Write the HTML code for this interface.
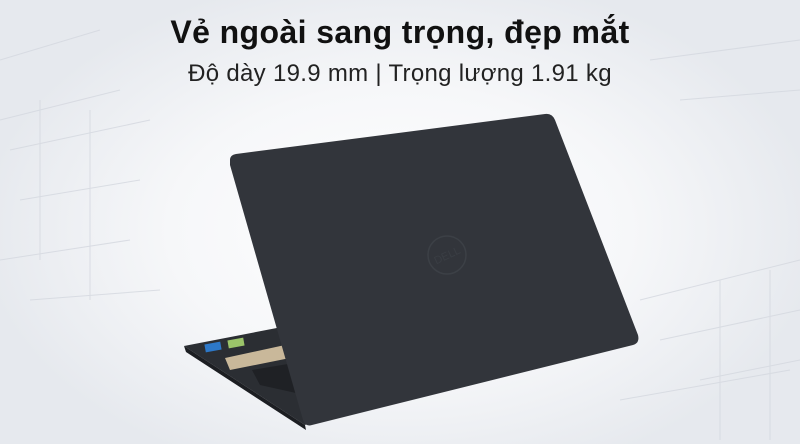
<!DOCTYPE html>
<html><head><meta charset="utf-8"><style>
html,body{margin:0;padding:0}
body{width:800px;height:444px;overflow:hidden;position:relative;font-family:"Liberation Sans",sans-serif;
background:radial-gradient(ellipse 420px 260px at 400px 230px,#ffffff 0%,#f6f7f9 55%,#e6e9ee 100%);}
.t1{position:absolute;left:0;width:800px;top:14px;text-align:center;font-weight:bold;font-size:32px;color:#111;letter-spacing:0.4px}
.t2{position:absolute;left:0;width:800px;top:60px;text-align:center;font-size:24px;color:#222;letter-spacing:0.3px}
svg{position:absolute;left:0;top:0}
</style></head><body>
<svg width="800" height="444">
<g stroke="#d3d7de" stroke-width="1" fill="none" opacity="0.8">
<path d="M0 120 L120 90 M10 150 L150 120 M20 200 L140 180 M0 260 L130 240 M30 300 L160 290 M0 60 L100 30 M40 100 L40 260 M90 110 L90 300"/>
<path d="M640 300 L800 260 M660 340 L800 310 M700 380 L800 360 M620 400 L790 370 M720 280 L720 440 M770 270 L770 440 M650 60 L800 40 M680 100 L800 90"/>
</g>
<polygon points="184,346 282,327 315,420 305,425" fill="#2b2e33"/>
<polygon points="184,346 305,425 306,430 186,352" fill="#1c1e22"/>
<rect x="205" y="343" width="16" height="8" fill="#2d78c8" transform="rotate(-10 213 347)"/>
<rect x="228" y="339" width="16" height="8" fill="#9bc46a" transform="rotate(-10 236 343)"/>
<polygon points="225,358 285,345 290,358 230,370" fill="#c9b89a"/>
<polygon points="252,370 300,362 305,395 260,385" fill="#1f2125"/>
<path d="M230,160 Q230,155 236,154 L545,114 Q552,113 555,120 L638,335 Q640,343 633,345 L312,425 Q305,427 303,420 L230,165 Z" fill="#32353b"/>
<circle cx="447" cy="255" r="19" fill="none" stroke="#3c4046" stroke-width="1.5"/>
<text x="447" y="259" font-size="11" fill="#3a3e44" text-anchor="middle" font-family="Liberation Sans" transform="rotate(-25 447 255)">DELL</text>
</svg>
<div class="t1">Vẻ ngoài sang trọng, đẹp mắt</div>
<div class="t2">Độ dày 19.9 mm | Trọng lượng 1.91 kg</div>
</body></html>
